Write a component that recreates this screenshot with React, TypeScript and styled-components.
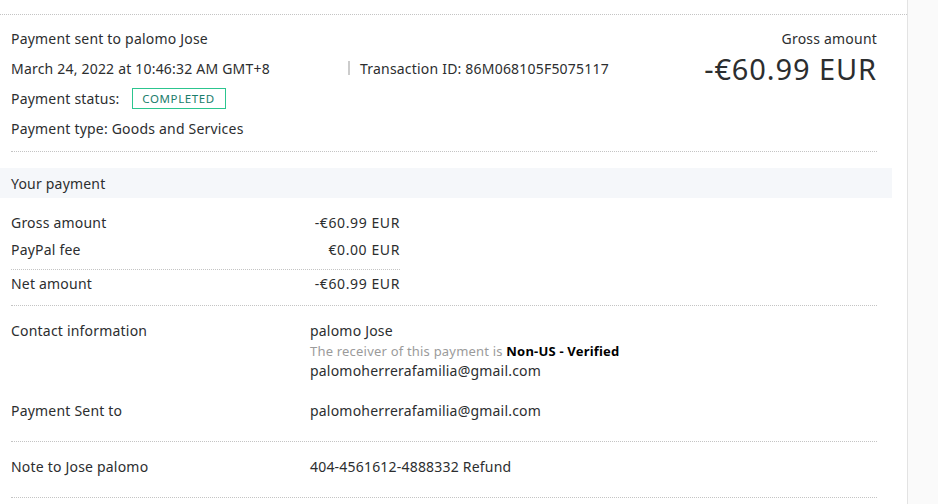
import React from "react";
import styled, { createGlobalStyle } from "styled-components";

const Global = createGlobalStyle`
  html, body { margin: 0; padding: 0; background: #ffffff; }
  body {
    font-family: "Noto Sans", "Open Sans", Arial, sans-serif;
    color: #2c2e2f;
    font-size: 14px;
    letter-spacing: 0.2px;
  }
`;

const Page = styled.div`
  display: flex;
  width: 938px;
  height: 504px;
  overflow: hidden;
`;

const Main = styled.main`
  width: 907px;
  flex: none;
  border-right: 1px solid #e3e3e3;
  padding-top: 14px;
  box-sizing: content-box;
`;

const Side = styled.aside`
  flex: 1;
  background: #fafafa;
`;

const TopRule = styled.div`
  border-top: 1px dotted #c4c4c4;
`;

const Summary = styled.section`
  margin: 0 30px 0 11px;
  padding: 8px 0 8px;
  border-bottom: 1px dotted #c4c4c4;
  display: flex;
  justify-content: space-between;
`;

const InfoList = styled.div`
  display: flex;
  flex-direction: column;
`;

const InfoLine = styled.div`
  height: 30px;
  display: flex;
  align-items: center;
  white-space: nowrap;
`;

const DateText = styled.span`
  display: inline-block;
  width: 337px;
`;

const Divider = styled.span`
  display: inline-block;
  width: 0;
  height: 14px;
  border-left: 2px solid #cccccc;
  margin-right: 10px;
`;

const Badge = styled.span`
  display: inline-flex;
  align-items: center;
  justify-content: center;
  box-sizing: border-box;
  width: 94px;
  height: 21px;
  margin-left: 12px;
  border: 1px solid #2cc58f;
  color: #1a7d6c;
  font-size: 11.5px;
  letter-spacing: 0.6px;
`;

const AmountBox = styled.div`
  display: flex;
  flex-direction: column;
  align-items: flex-end;
`;

const AmountLabel = styled.div`
  height: 30px;
  display: flex;
  align-items: center;
`;

const BigAmount = styled.div`
  font-size: 29px;
  line-height: 34px;
  margin-top: -1px;
  color: #2c2e2f;
  letter-spacing: 0.9px;
`;

const SectionHeader = styled.div`
  margin-top: 16px;
  width: 892px;
  height: 30px;
  box-sizing: border-box;
  padding-left: 11px;
  display: flex;
  align-items: center;
  background: #f5f7fa;
`;

const Amounts = styled.div`
  margin: 0 30px 0 11px;
  padding-top: 11px;
  padding-bottom: 8px;
  border-bottom: 1px dotted #c4c4c4;
`;

const AmountGroup = styled.div<{ $ruled?: boolean }>`
  width: 389px;
  padding-bottom: ${(p) => (p.$ruled ? "6px" : "0")};
  border-bottom: ${(p) => (p.$ruled ? "1px dotted #c4c4c4" : "none")};
`;

const AmountRow = styled.div`
  height: 27px;
  display: flex;
  align-items: center;
  justify-content: space-between;
`;

const Money = styled.span`
  letter-spacing: 0.6px;
`;

const DetailSection = styled.section`
  margin: 0 30px 0 11px;
  padding: 15px 0 20px;
  border-bottom: 1px dotted #c4c4c4;
  display: flex;
  flex-direction: column;
  gap: 20px;
`;

const DetailRow = styled.div`
  display: grid;
  grid-template-columns: 299px 1fr;
  line-height: 20px;
`;

const ValueStack = styled.div`
  display: flex;
  flex-direction: column;
`;

const Note = styled.div`
  font-size: 13px;
  color: #9b9b9b;
  line-height: 19px;
  margin-top: 1px;
`;

const Strong = styled.b`
  color: #000000;
  font-weight: 700;
`;

export default function App() {
  return (
    <>
      <Global />
      <Page>
        <Main>
          <TopRule />
          <Summary>
            <InfoList>
              <InfoLine>Payment sent to palomo Jose</InfoLine>
              <InfoLine>
                <DateText>March 24, 2022 at 10:46:32 AM GMT+8</DateText>
                <Divider />
                Transaction ID: 86M068105F5075117
              </InfoLine>
              <InfoLine>
                Payment status: <Badge>COMPLETED</Badge>
              </InfoLine>
              <InfoLine>Payment type: Goods and Services</InfoLine>
            </InfoList>
            <AmountBox>
              <AmountLabel>Gross amount</AmountLabel>
              <BigAmount>-€60.99 EUR</BigAmount>
            </AmountBox>
          </Summary>
          <SectionHeader>Your payment</SectionHeader>
          <Amounts>
            <AmountGroup $ruled>
              <AmountRow>
                <span>Gross amount</span>
                <Money>-€60.99 EUR</Money>
              </AmountRow>
              <AmountRow>
                <span>PayPal fee</span>
                <Money>€0.00 EUR</Money>
              </AmountRow>
            </AmountGroup>
            <AmountGroup>
              <AmountRow>
                <span>Net amount</span>
                <Money>-€60.99 EUR</Money>
              </AmountRow>
            </AmountGroup>
          </Amounts>
          <DetailSection>
            <DetailRow>
              <span>Contact information</span>
              <ValueStack>
                <span>palomo Jose</span>
                <Note>
                  The receiver of this payment is <Strong>Non-US - Verified</Strong>
                </Note>
                <span>palomoherrerafamilia@gmail.com</span>
              </ValueStack>
            </DetailRow>
            <DetailRow>
              <span>Payment Sent to</span>
              <span>palomoherrerafamilia@gmail.com</span>
            </DetailRow>
          </DetailSection>
          <DetailSection>
            <DetailRow>
              <span>Note to Jose palomo</span>
              <span>404-4561612-4888332 Refund</span>
            </DetailRow>
          </DetailSection>
        </Main>
        <Side />
      </Page>
    </>
  );
}
